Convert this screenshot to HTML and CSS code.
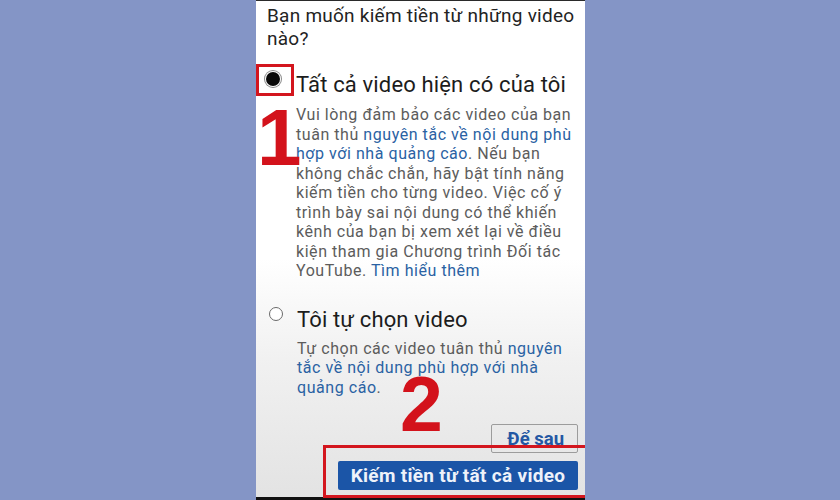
FILE: index.html
```html
<!DOCTYPE html>
<html lang="vi">
<head>
<meta charset="utf-8">
<title>Kiếm tiền</title>
<link rel="stylesheet" href="styles.css">
</head>
<body>
<div class="stage">
  <div class="screen">
    <p class="question">Bạn muốn kiếm tiền từ những video<br>nào?</p>
    <div class="option option-first">
      <span class="radio radio-on"></span>
      <div class="opt-body">
        <div class="opt-title">Tất cả video hiện có của tôi</div>
        <p class="opt-desc">Vui lòng đảm bảo các video của bạn<br>tuân thủ <span class="link">nguyên tắc về nội dung phù<br>hợp với nhà quảng cáo</span>. Nếu bạn<br>không chắc chắn, hãy bật tính năng<br>kiếm tiền cho từng video. Việc cố ý<br>trình bày sai nội dung có thể khiến<br>kênh của bạn bị xem xét lại về điều<br>kiện tham gia Chương trình Đối tác<br>YouTube. <span class="link">Tìm hiểu thêm</span></p>
      </div>
    </div>
    <div class="option option-second">
      <span class="radio"></span>
      <div class="opt-body">
        <div class="opt-title">Tôi tự chọn video</div>
        <p class="opt-desc">Tự chọn các video tuân thủ <span class="link">nguyên<br>tắc về nội dung phù hợp với nhà<br>quảng cáo</span>.</p>
      </div>
    </div>
    <div class="actions">
      <button class="btn-later">Để sau</button>
      <button class="btn-primary">Kiếm tiền từ tất cả video</button>
    </div>
  </div>
  <div class="mark mark-box1"></div>
  <div class="mark mark-num1">1</div>
  <div class="mark mark-num2">2</div>
  <div class="mark mark-box2"></div>
</div>
</body>
</html>
```
FILE: styles.css
```css
* { box-sizing: border-box; }
html, body { margin: 0; padding: 0; }
body {
  background: #8495c6;
  font-family: Roboto, "Noto Sans", "Liberation Sans", sans-serif;
  width: 840px;
  height: 500px;
  overflow: hidden;
}
.stage {
  position: relative;
  width: 840px;
  height: 500px;
}
.screen {
  margin-left: 256px;
  width: 329px;
  height: 500px;
  background: linear-gradient(to bottom, #ffffff 0%, #ffffff 52%, #f1f1f1 72%, #e3e3e3 100%);
  border-top: 1px solid #2a2a2a;
  border-bottom: 3px solid #111;
  display: flex;
  flex-direction: column;
  padding: 0 2px 0 11px;
}
.question {
  margin: 2.5px 0 0;
  font-size: 19px;
  line-height: 23px;
  letter-spacing: 0.25px;
  color: #232323;
  white-space: nowrap;
}
.option {
  display: flex;
  align-items: flex-start;
}
.option-first { margin-top: 21.5px; }
.option-second { margin-top: 25px; }
.radio {
  flex: none;
  width: 14px;
  height: 14px;
  border-radius: 50%;
  border: 1.5px solid #6a6a6a;
  background: #fff;
}
.radio-on {
  margin: 1px 0 0 -1px;
  border: none;
  background: #0a0a0a;
  box-shadow: 0 0 0 1px #fff, 0 0 0 2px #8a8a8a;
}
.option-second .radio { margin: 1px 0 0 2px; }
.opt-body { margin-left: 16px; }
.option-second .opt-body { margin-left: 14px; }
.opt-title {
  font-size: 22px;
  line-height: 28px;
  letter-spacing: 0.15px;
  color: #1c1c1c;
  white-space: nowrap;
}
.opt-desc {
  margin: 6px 0 0;
  font-size: 16px;
  line-height: 19.5px;
  letter-spacing: 0.55px;
  color: #5c5c5c;
  white-space: nowrap;
}
.option-second .opt-desc { margin-top: 5px; }
.link { color: #2a62a3; }
.actions {
  margin-top: auto;
  margin-bottom: 7px;
  margin-right: 5px;
  display: flex;
  flex-direction: column;
  align-items: flex-end;
}
.btn-later {
  font-family: inherit;
  width: 87px;
  height: 29px;
  background: transparent;
  border: 1px solid #9c9c9c;
  border-radius: 2px;
  color: #2457a3;
  font-size: 18.5px;
  font-weight: 700;
  padding: 0 13px 0 0;
  text-align: right;
}
.btn-primary {
  font-family: inherit;
  margin-top: 8px;
  width: 240px;
  height: 29px;
  background: #1b55a7;
  border: none;
  border-radius: 2px;
  color: #eef2fa;
  font-size: 19px;
  font-weight: 700;
  letter-spacing: 0.3px;
  padding: 0;
}
.mark { position: absolute; }
.mark-box1 {
  left: 256px;
  top: 64px;
  width: 38px;
  height: 32px;
  border: 3px solid #d3161e;
}
.mark-num1, .mark-num2 {
  font-family: "Liberation Sans", Arial, sans-serif;
  font-weight: 700;
  color: #d3121b;
  line-height: 1;
}
.mark-num1 {
  left: 257px;
  top: 98px;
  font-size: 80px;
}
.mark-num2 {
  left: 400px;
  top: 366px;
  font-size: 77px;
}
.mark-box2 {
  left: 323px;
  top: 445px;
  width: 262px;
  height: 53px;
  border: 3px solid #d3161e;
  border-right: none;
}
```
